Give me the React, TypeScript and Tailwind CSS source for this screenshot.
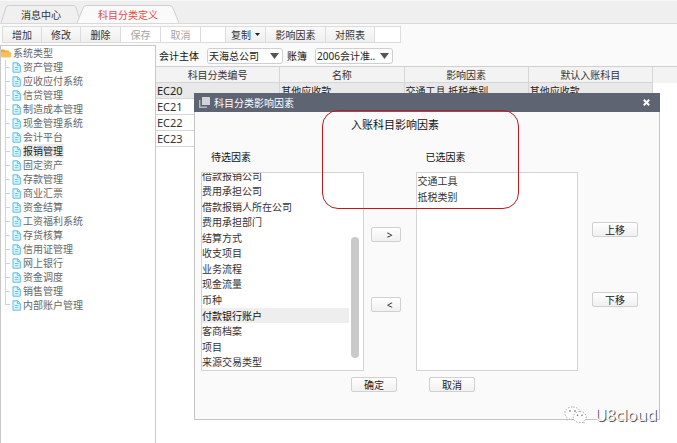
import { useState } from 'react'
import { clsx } from 'clsx'

const modules = [
  '资产管理', '应收应付系统', '信贷管理', '制造成本管理', '现金管理系统', '会计平台',
  '报销管理', '固定资产', '存款管理', '商业汇票', '资金结算', '工资福利系统',
  '存货核算', '信用证管理', '网上银行', '资金调度', '销售管理', '内部账户管理',
]

const toolbar = [
  { label: '增加', width: 'w-[39px]' },
  { label: '修改', width: 'w-[39px]' },
  { label: '删除', width: 'w-10' },
  { label: '保存', width: 'w-10', disabled: true },
  { label: '取消', width: 'w-10', disabled: true },
  { label: '', width: 'w-[25px]' },
  { label: '复制', width: 'w-10', menu: true },
  { label: '影响因素', width: 'w-[60px]' },
  { label: '对照表', width: 'w-[49px]' },
  { label: '', width: 'w-[25px]' },
]

const columns = ['科目分类编号', '名称', '影响因素', '默认入账科目']

const rows = [
  ['EC20', '其他应收款', '交通工具,抵税类别', '其他应收款'],
  ['EC21', '', '', ''],
  ['EC22', '', '', ''],
  ['EC23', '', '', ''],
]

const available = [
  '借款报销公司', '费用承担公司', '借款报销人所在公司', '费用承担部门', '结算方式',
  '收支项目', '业务流程', '现金流量', '币种', '付款银行账户', '客商档案', '项目', '来源交易类型',
]

const chosen = ['交通工具', '抵税类别']

function Tab({ label, active }: { label: string; active?: boolean }) {
  return (
    <button
      type="button"
      role="tab"
      aria-selected={!!active}
      className={clsx('relative h-[18px] pt-px', active ? 'z-10 -ml-1 w-[102px] text-[#e2474b]' : 'w-20 text-[#333]')}
    >
      <svg className="absolute inset-0 h-full w-full" viewBox="0 0 100 18" preserveAspectRatio="none">
        <path
          d="M0 18 L6 3 Q7 .5 9.500 .5 H90.500 Q93 .5 94 3 L100 18"
          fill={active ? '#fafafa' : '#f0f0f0'}
          stroke="#cfcfcf"
          vectorEffect="non-scaling-stroke"
        />
      </svg>
      <span className="relative">{label}</span>
    </button>
  )
}

function FileIcon() {
  return (
    <svg className="h-[11px] w-[9px] shrink-0" viewBox="0 0 9 11" fill="#e4f6fd" stroke="#55bfea">
      <path d="M1 .8h4.6L8.3 3.4v6.8H1z" />
      <path d="M5.4 1v2.6H8M2.8 5.5h3.6M2.8 7.7h3.6" fill="none" strokeWidth=".9" />
    </svg>
  )
}

function FolderIcon() {
  return (
    <svg className="h-[9px] w-[10px] shrink-0" viewBox="0 0 10 9">
      <path d="M0 1.2Q0 .4.8.4h2.6l1 1.2h3q.8 0 .8.8V4H0z" fill="#f0a83a" />
      <path d="M0 3h9q1 0 1 1v3.6q0 .8-.8.8H1Q0 8.400 0 7.600z" fill="#fbbf57" />
    </svg>
  )
}

function Picker({ id, label, value, width }: { id: string; label: string; value: string; width: string }) {
  return (
    <div className="flex items-center gap-2">
      <label htmlFor={id} className="text-[#111]">{label}</label>
      <div className={clsx('relative', width)}>
        <select
          id={id}
          className="block h-4 w-full appearance-none rounded-[3px] border border-[#cfcfcf] bg-white pl-px text-[#222]"
        >
          <option>{value}</option>
        </select>
        <svg className="pointer-events-none absolute top-[5px] right-1 h-[6px] w-[9px]" viewBox="0 0 9 6">
          <path d="M0 0h9L4.500 6z" fill="#555" />
        </svg>
      </div>
    </div>
  )
}

function DialogButton({ children, wide }: { children: string; wide?: boolean }) {
  return (
    <button
      type="button"
      className={clsx(
        'flex h-[15px] items-center justify-center rounded-[2px] border border-[#d0d0d0] bg-linear-to-b from-white to-[#f0f0f0] text-[#222]',
        wide ? 'w-[46px]' : 'w-[30px] pl-2',
      )}
    >
      {children}
    </button>
  )
}

function FactorDialog() {
  const [current, setCurrent] = useState('付款银行账户')

  return (
    <div
      role="dialog"
      aria-labelledby="dialog-title"
      className="absolute top-[93px] right-[17px] left-[194px] border border-[#c4c4c4] bg-[#fafafa] pb-[27px]"
    >
      <div className="-mx-px -mt-px flex h-[19px] items-center bg-[#5f6473] px-[5px] text-white">
        <svg className="mr-1 h-[11px] w-[11px]" viewBox="0 0 11 11">
          <path d="M3 0h8v8H3z" fill="#d0d3da" />
          <path d="M.7 3v7.300H8" fill="none" stroke="#b4b8c2" strokeWidth="1.400" />
        </svg>
        <h2 id="dialog-title">科目分类影响因素</h2>
        <button type="button" aria-label="关闭" className="mr-1 ml-auto p-px">
          <svg className="h-[7px] w-[7px]" viewBox="0 0 7 7" stroke="#fff" strokeWidth="2">
            <path d="M.8.8l5.400 5.400M6.200.8L.8 6.200" />
          </svg>
        </button>
      </div>

      <p className="pt-[5px] pl-[156px] text-[11px] leading-4 text-[#111]">入账科目影响因素</p>

      <div className="mt-4 flex pr-[21px] pl-[6px]">
        <div className="min-w-0 flex-1">
          <h3 id="available-title" className="h-[23px] pl-[10px] leading-4 text-[#111]">待选因素</h3>
          <div className="relative h-[199px] overflow-hidden border border-[#d4d4d4] bg-white">
            <ul
              role="listbox"
              aria-labelledby="available-title"
              className="absolute inset-x-0 bottom-0 flex h-[202px] flex-col pr-[14px]"
            >
              {available.map((name) => (
                <li
                  key={name}
                  role="option"
                  aria-selected={name === current}
                  onClick={() => setCurrent(name)}
                  className={clsx('flex flex-1 items-center', name === current ? 'bg-[#eee] text-[#111]' : 'text-[#333]')}
                >
                  {name}
                </li>
              ))}
            </ul>
            <div className="absolute right-1 bottom-3 h-[121px] w-2 rounded-full bg-[#cacaca]" />
          </div>
        </div>

        <div className="mr-[15px] ml-[7px] flex flex-col gap-[55px] pt-[78px]">
          <DialogButton>&gt;</DialogButton>
          <DialogButton>&lt;</DialogButton>
        </div>

        <div className="min-w-0 flex-1">
          <h3 id="chosen-title" className="h-[23px] pl-[10px] leading-4 text-[#111]">已选因素</h3>
          <ul
            role="listbox"
            aria-labelledby="chosen-title"
            className="h-[199px] border border-[#d4d4d4] bg-white pl-px leading-4 text-[#333]"
          >
            {chosen.map((name) => (
              <li key={name} role="option" aria-selected={false}>{name}</li>
            ))}
          </ul>
        </div>

        <div className="ml-[14px] flex flex-col gap-[55px] pt-[73px]">
          <DialogButton wide>上移</DialogButton>
          <DialogButton wide>下移</DialogButton>
        </div>
      </div>

      <div className="mt-[6px] flex gap-8 pl-[156px]">
        <DialogButton wide>确定</DialogButton>
        <DialogButton wide>取消</DialogButton>
      </div>

      {/* highlight around the title and the chosen factors */}
      <div className="pointer-events-none absolute top-4 left-[127px] h-[99px] w-[197px] rounded-2xl border border-[#c4161c]" />
    </div>
  )
}

function Watermark() {
  return (
    <div className="pointer-events-none absolute top-[404px] right-5 flex items-center gap-2">
      <svg className="h-[18px] w-[23px]" viewBox="0 0 23 18" fill="#fff" stroke="#888" strokeWidth=".7" strokeDasharray="1.500 1.500">
        <path d="M8.500 1C4 1 .8 3.700.8 7.200c0 2 1 3.600 2.800 4.700L3 14.300l2.700-1.400c1 .3 2 .4 3 .4 4.300 0 7.700-2.700 7.700-6.200S13 1 8.500 1z" />
        <path d="M15.800 5.600c-3.700 0-6.500 2.400-6.500 5.500s2.800 5.500 6.500 5.500c.8 0 1.600-.1 2.300-.3l2.200 1.200-.6-2c1.600-1 2.500-2.600 2.500-4.400 0-3.100-2.800-5.500-6.400-5.500z" />
        <g fill="#555" stroke="none">
          <circle cx="6" cy="5" r=".8" />
          <circle cx="11" cy="5" r=".8" />
          <circle cx="13.600" cy="9.300" r=".7" />
          <circle cx="18" cy="9.300" r=".7" />
        </g>
      </svg>
      <span className="text-base leading-[22px] text-white [text-shadow:1px_1px_0_#555]">U8cloud</span>
    </div>
  )
}

export default function App() {
  return (
    <div className="relative flex min-h-screen flex-col overflow-hidden bg-[#fafafa] font-['Noto_Sans','Noto_Sans_CJK_SC',sans-serif] text-[10px] leading-[14px] text-[#333]">
      <div role="tablist" className="flex h-6 items-end border-t border-b border-[#d9d9d9] border-t-[#f8f8f8] bg-[#efefef] pl-px">
        <Tab label="消息中心" />
        <Tab label="科目分类定义" active />
      </div>

      <div className="flex h-[21px] items-center pl-[2px]">
        <div className="flex h-[17px] border border-[#dcdcdc]">
          {toolbar.map((item, index) =>
            item.label ? (
              <button
                key={index}
                type="button"
                disabled={item.disabled}
                className={clsx(
                  'flex items-center justify-center border-r border-[#dcdcdc]',
                  item.width,
                  item.disabled ? 'bg-white text-[#a5a5a5]' : 'bg-linear-to-b from-[#fafafa] to-[#efefef]',
                )}
              >
                {item.label}
                {item.menu && (
                  <svg className="ml-1 h-[3px] w-[5px]" viewBox="0 0 5 3">
                    <path d="M0 0h5L2.500 3z" fill="#222" />
                  </svg>
                )}
              </button>
            ) : (
              <span key={index} className={clsx('border-r border-[#dcdcdc] bg-white last:border-r-0', item.width)} />
            ),
          )}
        </div>
      </div>

      <div className="flex flex-1">
        <nav className="w-[156px] shrink-0 border border-b-0 border-[#c8c8c8] bg-white text-[#666]">
          <div className="flex h-[14px] items-center gap-[2px]">
            <FolderIcon />
            系统类型
          </div>
          <ul>
            {modules.map((name) => (
              <li key={name} className="flex h-[14px] items-center pl-1 group">
                <span className="flex h-full w-[5px] shrink-0 items-center border-l border-[#d8cfcf] group-last:h-[7px] group-last:items-end group-last:self-start">
                  <span className="h-px w-full bg-[#d8cfcf]" />
                </span>
                <span className="ml-[2px] flex items-center gap-[2px]">
                  <FileIcon />
                  <a href="#" className={clsx('pr-px', name === '报销管理' && 'bg-[#ececec] text-[#222]')}>
                    {name}
                  </a>
                </span>
              </li>
            ))}
          </ul>
        </nav>

        <main className="flex min-w-0 flex-1 flex-col">
          <div className="flex h-[21px] items-center gap-1 pl-[3px]">
            <Picker id="entity" label="会计主体" value="天海总公司" width="w-[76px]" />
            <Picker id="book" label="账簿" value="2006会计准.." width="w-[78px]" />
          </div>
          <div className="flex-1 bg-white">
            <div className="border-t border-[#d0d0d0] bg-[linear-gradient(#f3f3f3_16px,transparent_16px)] pr-6">
              <table className="w-full table-fixed border-separate border-spacing-0">
                <thead>
                  <tr>
                    {columns.map((name) => (
                      <th key={name} className="h-4 border-r border-b border-[#d6d6d6] p-0 font-normal">
                        {name}
                      </th>
                    ))}
                  </tr>
                </thead>
                <tbody>
                  {rows.map((row, index) => (
                    <tr key={row[0]} className={index === 0 ? 'bg-[#e9e9e9] text-[#222]' : ''}>
                      {row.map((cell, i) => (
                        <td
                          key={i}
                          className={clsx('h-4 border-r border-b border-[#d6d6d6] p-0 pl-px', i === 0 && 'text-[11px]')}
                        >
                          {cell}
                        </td>
                      ))}
                    </tr>
                  ))}
                </tbody>
              </table>
            </div>
          </div>
        </main>
      </div>

      <FactorDialog />
      <Watermark />
    </div>
  )
}
